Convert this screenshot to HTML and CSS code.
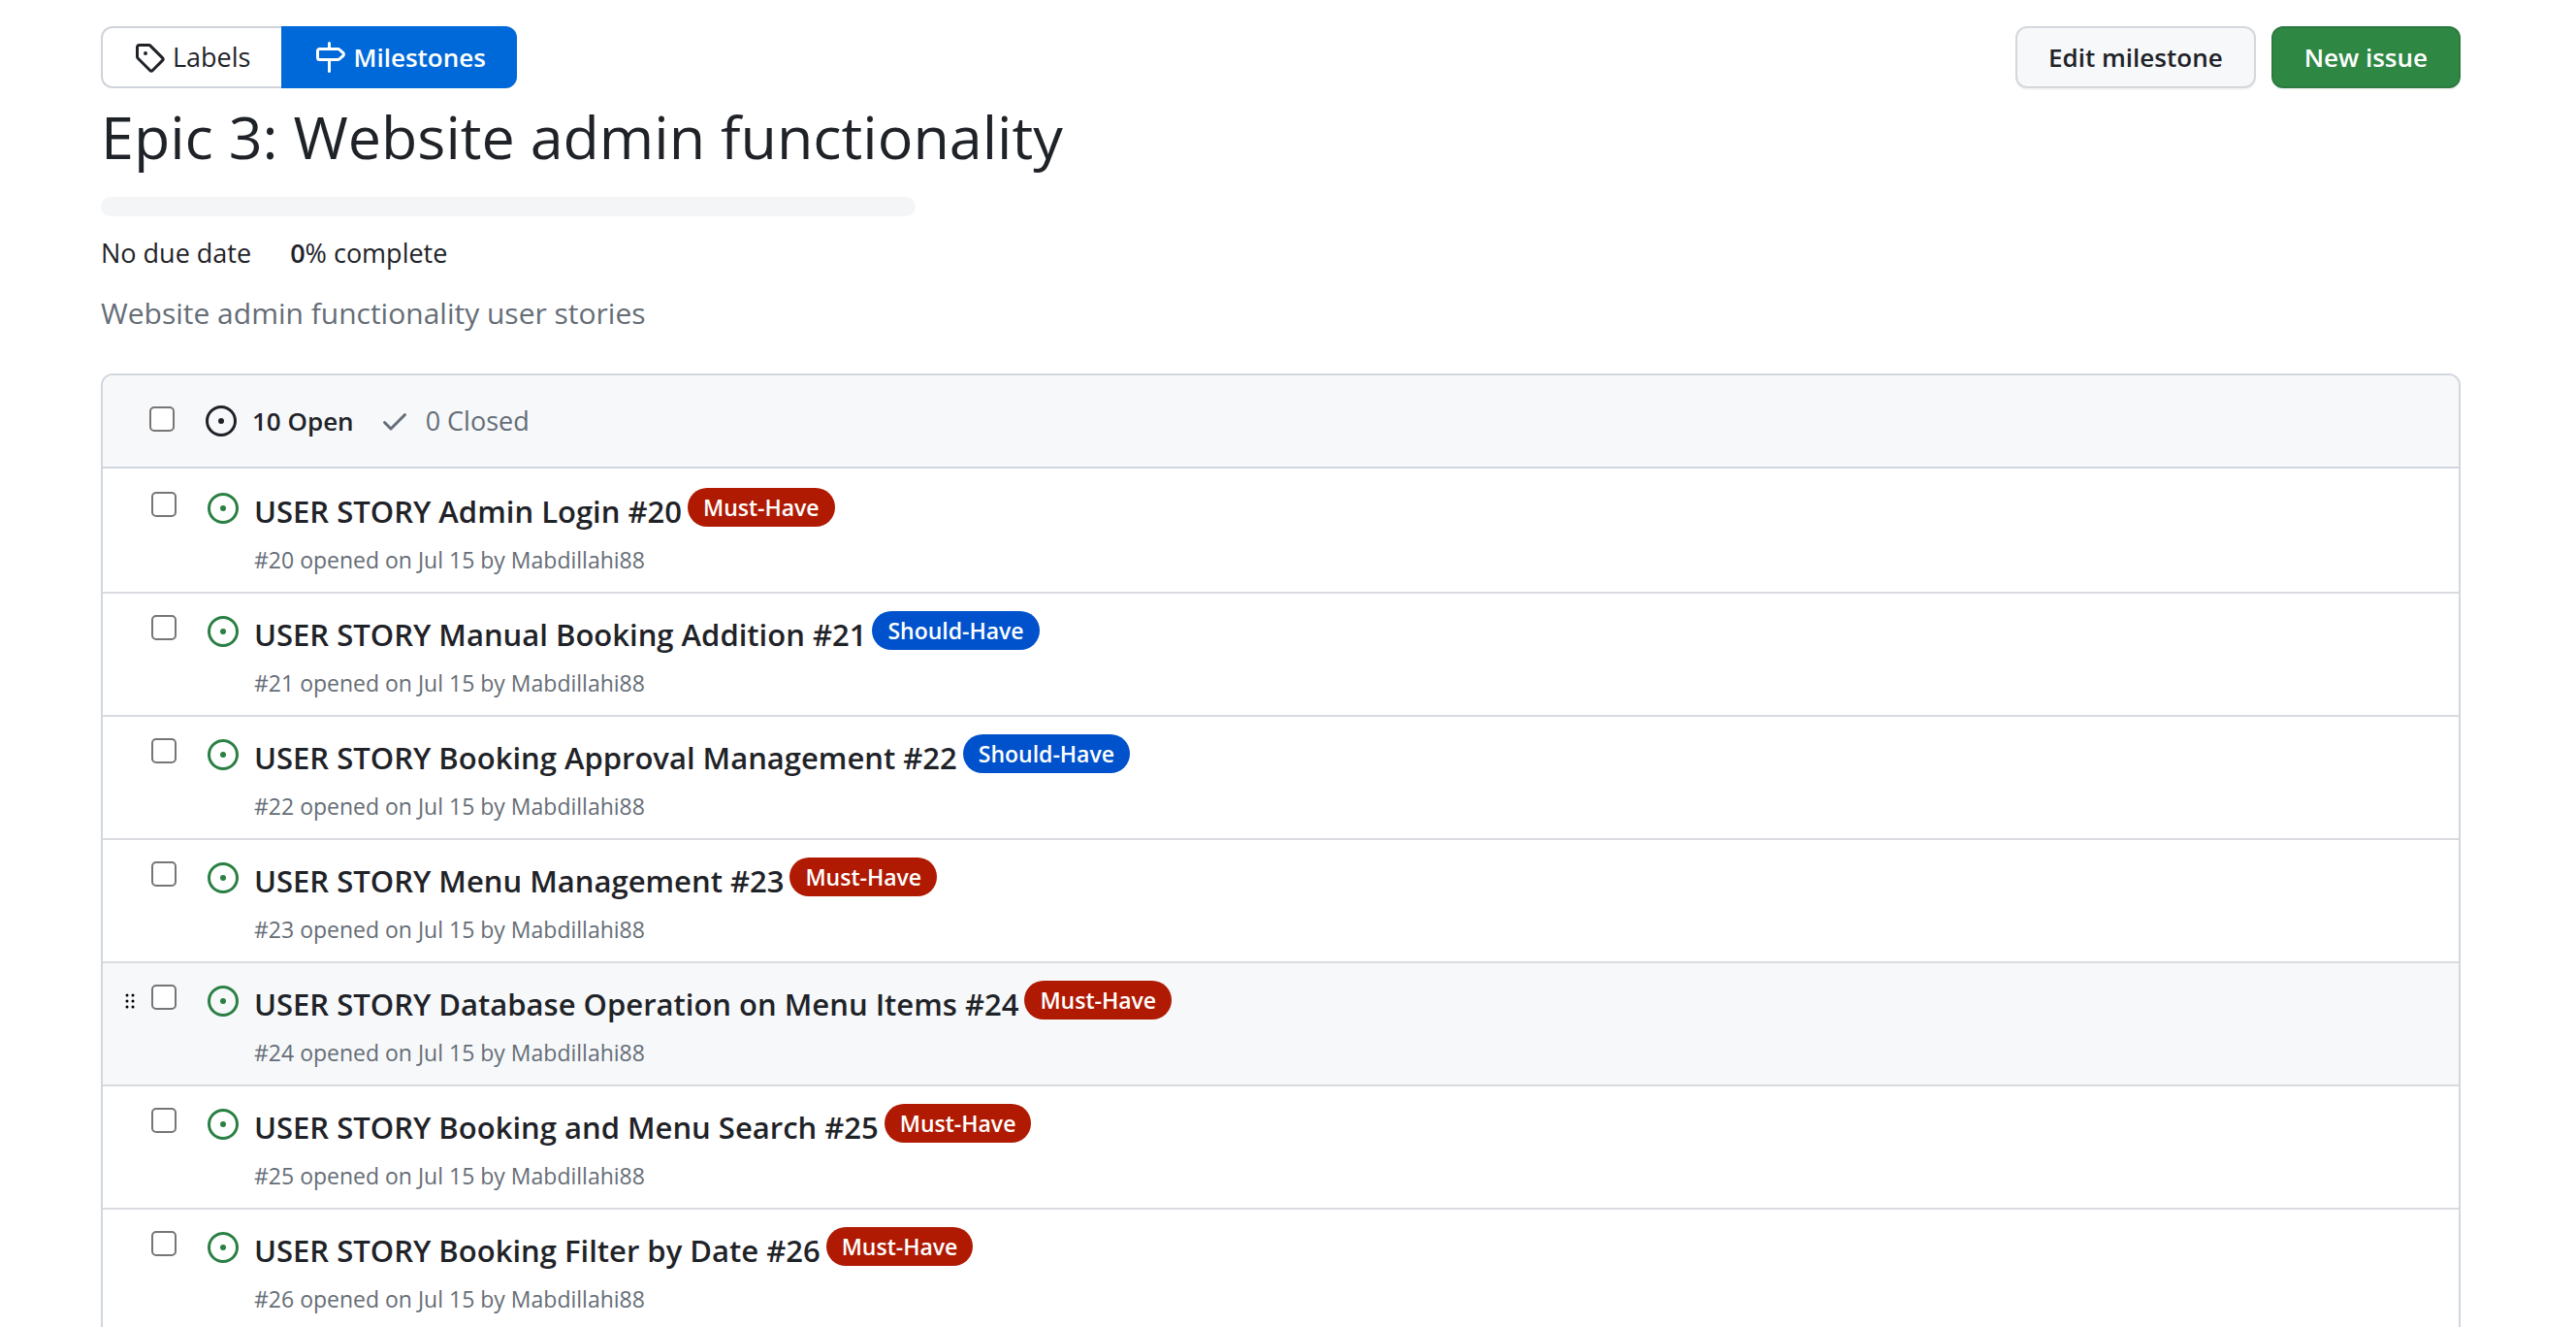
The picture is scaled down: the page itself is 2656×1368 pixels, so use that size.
FILE: index.html
```
<!DOCTYPE html>
<html lang="en">
<head>
<meta charset="utf-8">
<title>Epic 3: Website admin functionality</title>
<meta name="viewport" content="width=device-width, initial-scale=1">
<link rel="stylesheet" href="styles.css">
</head>
<body>
<svg class="sprite" aria-hidden="true">
  <symbol id="tag" viewBox="0 0 16 16"><path d="M1 7.775V2.75C1 1.784 1.784 1 2.75 1h5.025c.464 0 .91.184 1.238.513l6.25 6.25a1.75 1.75 0 0 1 0 2.474l-5.026 5.026a1.75 1.75 0 0 1-2.474 0l-6.25-6.25A1.752 1.752 0 0 1 1 7.775Zm1.5 0c0 .066.026.13.073.177l6.25 6.25a.25.25 0 0 0 .354 0l5.025-5.025a.25.25 0 0 0 0-.354l-6.25-6.25a.25.25 0 0 0-.177-.073H2.75a.25.25 0 0 0-.25.25ZM6 5a1 1 0 1 1 0 2 1 1 0 0 1 0-2Z"/></symbol>
  <symbol id="milestone" viewBox="0 0 16 16"><path d="M7.75 0a.75.75 0 0 1 .75.75V3h3.634c.414 0 .814.147 1.13.414l2.07 1.75a1.75 1.75 0 0 1 0 2.672l-2.07 1.75a1.75 1.75 0 0 1-1.13.414H8.5v5.25a.75.75 0 0 1-1.5 0V10H2.75A1.75 1.75 0 0 1 1 8.25v-3.5C1 3.784 1.784 3 2.75 3H7V.75A.75.75 0 0 1 7.75 0Zm4.384 8.5a.25.25 0 0 0 .161-.06l2.07-1.75a.248.248 0 0 0 0-.38l-2.07-1.75a.25.25 0 0 0-.161-.06H2.75a.25.25 0 0 0-.25.25v3.5c0 .138.112.25.25.25h9.384Z"/></symbol>
  <symbol id="open" viewBox="0 0 16 16"><path d="M8 9.5a1.5 1.5 0 1 0 0-3 1.5 1.5 0 0 0 0 3Z"/><path d="M8 0a8 8 0 1 1 0 16A8 8 0 0 1 8 0ZM1.5 8a6.5 6.5 0 1 0 13 0 6.5 6.5 0 0 0-13 0Z"/></symbol>
  <symbol id="check" viewBox="0 0 16 16"><path d="M13.78 4.22a.75.75 0 0 1 0 1.06l-7.25 7.25a.75.75 0 0 1-1.06 0L2.22 9.28a.751.751 0 0 1 .018-1.042.751.751 0 0 1 1.042-.018L6 10.94l6.72-6.72a.75.75 0 0 1 1.06 0Z"/></symbol>
  <symbol id="grip" viewBox="0 0 10 16"><circle cx="2" cy="2" r="1.5"/><circle cx="8" cy="2" r="1.5"/><circle cx="2" cy="8" r="1.5"/><circle cx="8" cy="8" r="1.5"/><circle cx="2" cy="14" r="1.5"/><circle cx="8" cy="14" r="1.5"/></symbol>
</svg>
<main class="page">
  <header class="toolbar">
    <nav class="subnav">
      <a class="subnav-item" href="#labels"><svg class="icon"><use href="#tag"/></svg>Labels</a>
      <a class="subnav-item selected" href="#milestones"><svg class="icon"><use href="#milestone"/></svg>Milestones</a>
    </nav>
    <div class="actions">
      <button class="btn" type="button">Edit milestone</button>
      <button class="btn primary" type="button">New issue</button>
    </div>
  </header>
  <h1 class="title">Epic 3: Website admin functionality</h1>
  <div class="progress"></div>
  <div class="meta"><span>No due date</span><span><b>0</b>% complete</span></div>
  <p class="description">Website admin functionality user stories</p>
  <section class="box">
    <div class="box-header">
      <input class="tick" type="checkbox" aria-label="Select all issues">
      <a class="state current" href="#open-issues"><svg class="icon"><use href="#open"/></svg>10 Open</a>
      <a class="state" href="#closed-issues"><svg class="icon"><use href="#check"/></svg>0 Closed</a>
    </div>
    <ul class="issues">
      <li class="issue">
        <span class="handle"></span>
        <input class="tick" type="checkbox" aria-label="Select issue 20">
        <svg class="icon opened"><use href="#open"/></svg>
        <div class="text"><div class="line"><a class="name" href="#20">USER STORY Admin Login #20</a><a class="label must" href="#must-have">Must-Have</a></div><div class="by">#20 opened on Jul 15 by Mabdillahi88</div></div>
      </li>
      <li class="issue">
        <span class="handle"></span>
        <input class="tick" type="checkbox" aria-label="Select issue 21">
        <svg class="icon opened"><use href="#open"/></svg>
        <div class="text"><div class="line"><a class="name" href="#21">USER STORY Manual Booking Addition #21</a><a class="label should" href="#should-have">Should-Have</a></div><div class="by">#21 opened on Jul 15 by Mabdillahi88</div></div>
      </li>
      <li class="issue">
        <span class="handle"></span>
        <input class="tick" type="checkbox" aria-label="Select issue 22">
        <svg class="icon opened"><use href="#open"/></svg>
        <div class="text"><div class="line"><a class="name" href="#22">USER STORY Booking Approval Management #22</a><a class="label should" href="#should-have">Should-Have</a></div><div class="by">#22 opened on Jul 15 by Mabdillahi88</div></div>
      </li>
      <li class="issue">
        <span class="handle"></span>
        <input class="tick" type="checkbox" aria-label="Select issue 23">
        <svg class="icon opened"><use href="#open"/></svg>
        <div class="text"><div class="line"><a class="name" href="#23">USER STORY Menu Management #23</a><a class="label must" href="#must-have">Must-Have</a></div><div class="by">#23 opened on Jul 15 by Mabdillahi88</div></div>
      </li>
      <li class="issue active">
        <span class="handle"><svg class="grip"><use href="#grip"/></svg></span>
        <input class="tick" type="checkbox" aria-label="Select issue 24">
        <svg class="icon opened"><use href="#open"/></svg>
        <div class="text"><div class="line"><a class="name" href="#24">USER STORY Database Operation on Menu Items #24</a><a class="label must" href="#must-have">Must-Have</a></div><div class="by">#24 opened on Jul 15 by Mabdillahi88</div></div>
      </li>
      <li class="issue">
        <span class="handle"></span>
        <input class="tick" type="checkbox" aria-label="Select issue 25">
        <svg class="icon opened"><use href="#open"/></svg>
        <div class="text"><div class="line"><a class="name" href="#25">USER STORY Booking and Menu Search #25</a><a class="label must" href="#must-have">Must-Have</a></div><div class="by">#25 opened on Jul 15 by Mabdillahi88</div></div>
      </li>
      <li class="issue">
        <span class="handle"></span>
        <input class="tick" type="checkbox" aria-label="Select issue 26">
        <svg class="icon opened"><use href="#open"/></svg>
        <div class="text"><div class="line"><a class="name" href="#26">USER STORY Booking Filter by Date #26</a><a class="label must" href="#must-have">Must-Have</a></div><div class="by">#26 opened on Jul 15 by Mabdillahi88</div></div>
      </li>
    </ul>
  </section>
</main>
</body>
</html>
```
FILE: styles.css
```
* { box-sizing: border-box; }
body {
  margin: 0;
  background: #fff;
  color: #1f2328;
  font-family: "Open Sans", "Noto Sans", sans-serif;
  font-size: 27px;
  line-height: 40px;
}
a { color: inherit; text-decoration: none; }
.sprite { display: none; }
.icon { width: 32px; height: 32px; fill: currentColor; flex: none; }
.page { padding: 27px 119px 0 104px; }

.toolbar { display: flex; justify-content: space-between; align-items: center; }
.subnav, .actions { display: flex; }
.actions { gap: 16px; }
.subnav-item, .btn {
  display: flex;
  align-items: center;
  gap: 8px;
  height: 64px;
  padding: 0 32px;
  border: 2px solid #d0d4da;
  font: 600 26px/40px "Open Sans", "Noto Sans", sans-serif;
  color: #1f2328;
}
.subnav-item { border-right: 0; border-radius: 12px 0 0 12px; font-size: 27px; font-weight: 400; }
.subnav-item.selected {
  border-color: #0069d9;
  border-radius: 0 12px 12px 0;
  background: #0069d9;
  color: #fff;
  font-size: 26px;
  font-weight: 600;
}
.btn { border-color: #d4d7db; border-radius: 12px; background: #f6f8fa; box-shadow: 0 2px 0 rgba(31, 35, 40, .04); }
.btn.primary { border-color: #2d7a41; background: #2e8844; color: #fff; }

.title { margin: 0 0 12px; font-size: 61px; line-height: 100px; font-weight: 400; }
.progress { width: 840px; max-width: 100%; height: 20px; border-radius: 12px; background: #f4f5f7; }
.meta { display: flex; gap: 40px; margin-top: 18px; }
.meta b { font-weight: 600; }
.description { margin: 18px 0 0; color: #656d76; font-size: 30px; line-height: 48px; }

.box { margin-top: 38px; border: 2px solid #d0d7de; border-radius: 12px 12px 0 0; overflow: hidden; }
.box-header {
  display: flex;
  align-items: center;
  height: 96px;
  padding-left: 48px;
  border-bottom: 2px solid #d0d7de;
  background: #f6f8fa;
}
.tick {
  appearance: none;
  flex: none;
  width: 26px;
  height: 26px;
  margin: 0;
  border: 2px solid #767676;
  border-radius: 5px;
  background: #fff;
}
.box-header .tick { margin: 0 32px 4px 0; }
.state { display: flex; align-items: center; gap: 16px; margin-right: 26px; color: #656d76; }
.state.current { color: #1f2328; font-size: 26px; font-weight: 600; }

.issues { margin: 0; padding: 0; list-style: none; }
.issue { display: flex; align-items: flex-start; height: 127px; border-top: 2px solid #d8dbdf; }
.issue:first-child { border-top-color: transparent; }
.issue .tick { margin-top: 22px; }
.issue.active { background: #f6f8fa; }
.handle { display: flex; width: 50px; padding: 31px 0 0 22px; }
.grip { width: 12px; height: 16px; }
.opened { margin: 23px 0 0 32px; color: #2a7f43; }
.text { margin-left: 16px; }
.line { display: flex; align-items: flex-start; gap: 6px; padding-top: 18px; }
.name { font-size: 31px; line-height: 48px; font-weight: 600; }
.label { padding: 0 16px; border-radius: 20px; color: #fff; font-size: 23px; line-height: 40px; font-weight: 600; }
.must { background: #b01a02; }
.should { background: #0052cc; }
.by { color: #656d76; font-size: 23px; line-height: 52px; }
```
